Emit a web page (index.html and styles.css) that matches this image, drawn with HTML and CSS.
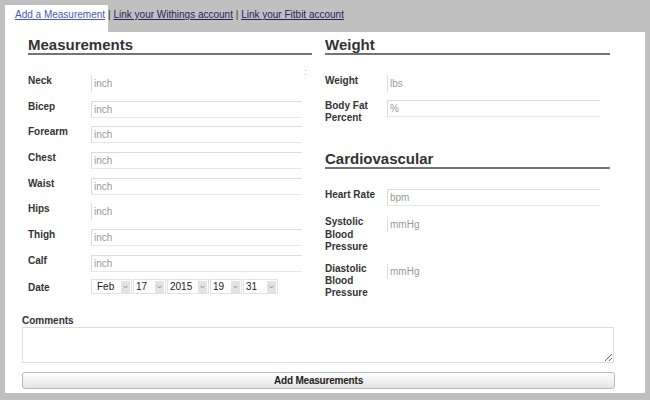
FILE: index.html
```html
<!DOCTYPE html>
<html>
<head>
<meta charset="utf-8">
<link rel="stylesheet" href="styles.css">
</head>
<body>
<div class="nav">
  <span class="tab"><a class="active" href="#">Add a Measurement</a></span><span class="sep">|&nbsp;</span><a href="#">Link your Withings account</a><span class="sep">&nbsp;|&nbsp;</span><a href="#">Link your Fitbit account</a>
</div>
<div class="panel">
  <div class="columns">
    <div class="col col-left">
      <span class="grip"></span>
      <h2 class="heading">Measurements</h2>
      <div class="row"><label>Neck</label><input class="stub" placeholder="inch"></div>
      <div class="row"><label>Bicep</label><input placeholder="inch"></div>
      <div class="row"><label>Forearm</label><input placeholder="inch"></div>
      <div class="row"><label>Chest</label><input placeholder="inch"></div>
      <div class="row"><label>Waist</label><input placeholder="inch"></div>
      <div class="row"><label>Hips</label><input class="stub" placeholder="inch"></div>
      <div class="row"><label>Thigh</label><input placeholder="inch"></div>
      <div class="row"><label>Calf</label><input placeholder="inch"></div>
      <div class="row last date-row"><label>Date</label>
        <div class="selects">
          <div class="sel w-feb"><span class="val pad5">Feb</span><span class="arrow"><svg width="5" height="4" viewBox="0 0 5 4"><path d="M0.5 0.8 L2.5 3 L4.5 0.8" fill="none" stroke="#8a8a8a" stroke-width="0.9"/></svg></span></div>
          <div class="sel w-17"><span class="val">17</span><span class="arrow"><svg width="5" height="4" viewBox="0 0 5 4"><path d="M0.5 0.8 L2.5 3 L4.5 0.8" fill="none" stroke="#8a8a8a" stroke-width="0.9"/></svg></span></div>
          <div class="sel w-2015"><span class="val">2015</span><span class="arrow"><svg width="5" height="4" viewBox="0 0 5 4"><path d="M0.5 0.8 L2.5 3 L4.5 0.8" fill="none" stroke="#8a8a8a" stroke-width="0.9"/></svg></span></div>
          <div class="sel w-19"><span class="val">19</span><span class="arrow"><svg width="5" height="4" viewBox="0 0 5 4"><path d="M0.5 0.8 L2.5 3 L4.5 0.8" fill="none" stroke="#8a8a8a" stroke-width="0.9"/></svg></span></div>
          <div class="sel w-31"><span class="val">31</span><span class="arrow"><svg width="5" height="4" viewBox="0 0 5 4"><path d="M0.5 0.8 L2.5 3 L4.5 0.8" fill="none" stroke="#8a8a8a" stroke-width="0.9"/></svg></span></div>
        </div>
      </div>
    </div>
    <div class="col col-right">
      <h2 class="heading">Weight</h2>
      <div class="group-w">
        <div class="row"><label>Weight</label><input class="stub" placeholder="lbs"></div>
        <div class="row last"><label>Body Fat<br>Percent</label><input placeholder="%"></div>
      </div>
      <h2 class="heading second">Cardiovascular</h2>
      <div class="group-c">
        <div class="row"><label>Heart Rate</label><input placeholder="bpm"></div>
        <div class="row"><label>Systolic<br>Blood<br>Pressure</label><input class="stub" placeholder="mmHg"></div>
        <div class="row last"><label>Diastolic<br>Blood<br>Pressure</label><input class="stub" placeholder="mmHg"></div>
      </div>
    </div>
  </div>
  <div class="comments">
    <label class="comments-label">Comments</label>
    <textarea class="comments-box"></textarea>
    <button class="submit">Add Measurements</button>
  </div>
</div>
</body>
</html>
```
FILE: styles.css
```css
html, body {
  margin: 0;
  padding: 0;
}
body {
  background: #c0c0c0;
  font-family: "Liberation Sans", Arial, sans-serif;
  color: #333;
  width: 650px;
  height: 400px;
  overflow: hidden;
}
.nav {
  display: flex;
  align-items: flex-start;
  padding: 5px 0 0 5px;
  height: 32px;
  box-sizing: border-box;
  font-size: 10px;
  line-height: 12px;
  white-space: nowrap;
}
.nav .sep {
  padding-top: 4px;
  color: #333;
}
.nav a {
  color: #23235e;
  text-decoration: underline;
}
.nav > a {
  padding-top: 4px;
}
.nav a.active {
  color: #4b57b4;
}
.tab {
  background: #fff;
  padding: 4px 3px 11px 10px;
  height: 12px;
}
.panel {
  margin-left: 5px;
  width: 640px;
  height: 361px;
  box-sizing: border-box;
  background: #fff;
  padding: 0 30px 5px 17px;
}
.columns {
  display: grid;
  grid-template-columns: 284px 285px;
  column-gap: 13px;
  margin-left: 6px;
  align-items: start;
}
.col {
  position: relative;
  padding-right: 10px;
}
.heading {
  font-size: 15px;
  line-height: 14px;
  font-weight: bold;
  color: #333;
  margin: 5.8px -10px 20.2px 0;
  padding-bottom: 1px;
  border-bottom: 2px solid #747474;
}
.heading.second {
  margin-top: 27.8px;
}
.row {
  display: grid;
  grid-template-columns: 63px 1fr;
  align-items: start;
  margin-bottom: 8.7px;
  min-height: 17px;
}
.col-right .row {
  grid-template-columns: 62px 1fr;
}
.group-w .row {
  margin-bottom: 8px;
}
.group-c .row {
  margin-bottom: 10px;
}
.row.last,
.group-w .row.last,
.group-c .row.last {
  margin-bottom: 0;
}
.row label {
  font-size: 10px;
  line-height: 12.2px;
  font-weight: bold;
  color: #333;
}
.row input {
  display: block;
  width: 100%;
  height: 17px;
  box-sizing: border-box;
  margin: 0;
  padding: 1px 2px;
  font-family: "Liberation Sans", Arial, sans-serif;
  font-size: 10px;
  color: #333;
  background: #fff;
  border: 1px solid #dcdcdc;
  border-bottom-color: #e8e8e8;
  border-right: none;
  outline: none;
}
.row input.stub {
  border-top-color: transparent;
  border-bottom-color: transparent;
}
.row input::placeholder {
  color: #9a9a9a;
}
.date-row label {
  padding-top: 1.6px;
}
.selects {
  display: flex;
  gap: 1px;
  margin-top: -1.3px;
}
.sel {
  display: flex;
  align-items: center;
  height: 15px;
  box-sizing: border-box;
  border: 1px solid #e2e2e2;
  background: #fff;
  font-size: 10px;
  color: #222;
}
.sel .val {
  flex: 1;
  padding-left: 2px;
  line-height: 12px;
}
.sel .val.pad5 {
  padding-left: 5px;
}
.sel .arrow {
  width: 9px;
  height: 12px;
  margin-right: 1px;
  background: #e3e3e3;
  display: flex;
  align-items: center;
  justify-content: center;
}
.w-feb { width: 41px; }
.w-17 { width: 33px; }
.w-2015 { width: 42px; }
.w-19 { width: 32px; }
.w-31 { width: 35px; }
.grip {
  position: absolute;
  left: 277px;
  top: 38px;
  width: 1px;
  height: 6px;
  background: linear-gradient(#b5b5b5 0 1px, transparent 1px 4px, #b5b5b5 4px 5px, transparent 5px);
}
.comments {
  margin-top: 16.1px;
}
.comments-label {
  display: block;
  font-size: 10px;
  line-height: 10px;
  font-weight: bold;
  color: #333;
}
.comments-box {
  display: block;
  margin: 1.3px 0 0 0;
  width: 592px;
  height: 36px;
  box-sizing: border-box;
  border: 1px solid #dedede;
  padding: 2px;
  font-family: "Liberation Sans", Arial, sans-serif;
  font-size: 10px;
}
.submit {
  display: block;
  margin-top: 9px;
  width: 593px;
  height: 17px;
  box-sizing: border-box;
  padding: 0;
  border: 1px solid #b9b9b9;
  border-radius: 3px;
  background: linear-gradient(#ffffff, #e4e4e4);
  font-family: "Liberation Sans", Arial, sans-serif;
  font-size: 10px;
  font-weight: bold;
  letter-spacing: -0.2px;
  color: #222;
  line-height: 15px;
}
```
